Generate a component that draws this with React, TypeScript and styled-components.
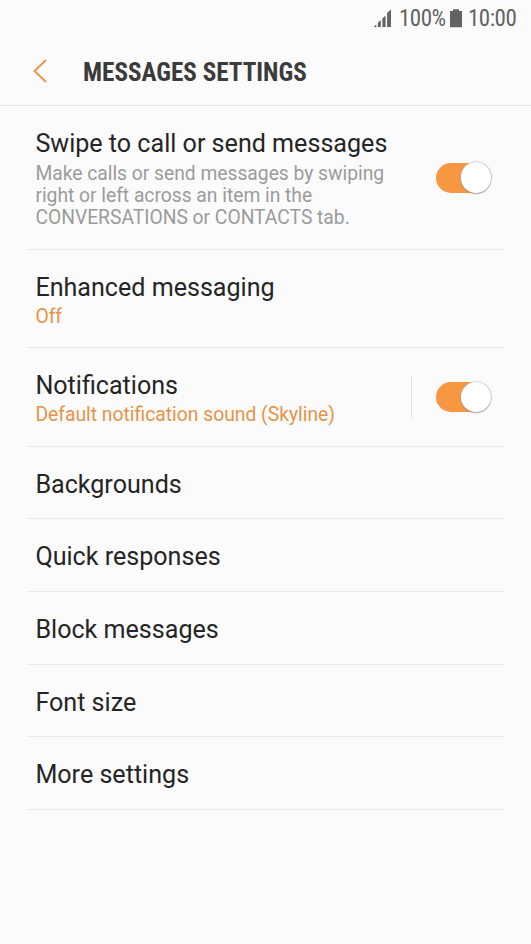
import React from "react";
import styled, { createGlobalStyle } from "styled-components";

const GlobalStyle = createGlobalStyle`
  body { margin: 0; background: #fbfbfb; }
  * { box-sizing: border-box; }
`;

const Screen = styled.main`
  width: 531px;
  height: 944px;
  overflow: hidden;
  background: #fbfbfb;
  font-family: Roboto, sans-serif;
  color: #252525;
`;

const StatusBar = styled.div`
  display: flex;
  align-items: center;
  height: 38px;
  padding: 0 0 2px 373px;
  color: #636363;
`;

const StatusText = styled.span<{ $width: number }>`
  width: ${(p) => p.$width}px;
  font-family: "Roboto Condensed", Roboto, sans-serif;
  font-stretch: 75%;
  font-size: 23px;
  letter-spacing: -0.5px;
  line-height: 36px;
  padding-top: 2px;
  white-space: nowrap;
`;

const SignalIcon = styled.svg`
  width: 19px;
  height: 19px;
  margin-right: 7px;
`;

const BatteryIcon = styled.svg`
  width: 12px;
  height: 19px;
  margin: 0 6px 0 5px;
`;

const Header = styled.header`
  display: flex;
  align-items: center;
  height: 68px;
  border-bottom: 1px solid #e4e4e4;
  padding: 0 0 0 32px;
`;

const BackButton = styled.button`
  display: flex;
  width: 51px;
  height: 26px;
  margin-bottom: 2px;
  padding: 0;
  border: 0;
  background: none;
`;

const PageTitle = styled.h1`
  margin: 2px 0 0;
  font-family: "Roboto Condensed", Roboto, sans-serif;
  font-stretch: 75%;
  font-weight: 700;
  font-size: 25.15px;
  line-height: 30px;
  color: #3b3b3b;
  white-space: nowrap;
`;

const List = styled.div`
  margin: 0 27px;
`;

const Row = styled.section<{ $height: number }>`
  display: flex;
  align-items: center;
  height: ${(p) => p.$height}px;
  border-bottom: 1px solid #e9e9e9;
  padding: 0 13px 0 8.4px;
`;

const RowText = styled.div`
  flex: 1;
  align-self: flex-start;
  padding-top: 23px;
`;

const Title = styled.h2`
  margin: 0;
  font-weight: 400;
  font-size: 25.1px;
  line-height: 30px;
  white-space: nowrap;
`;

const Detail = styled.p<{ $accent?: boolean }>`
  margin: ${(p) => (p.$accent ? 2.5 : 3.6)}px 0 0;
  font-size: 19.3px;
  letter-spacing: ${(p) => (p.$accent ? 0 : -0.02)}px;
  line-height: 22.4px;
  white-space: pre-line;
  color: ${(p) => (p.$accent ? "#e69348" : "#9b9b9b")};
`;

const Separator = styled.div`
  width: 1px;
  height: 43px;
  margin-right: 24px;
  background: #e4e4e4;
`;

const Track = styled.div`
  display: flex;
  align-items: center;
  justify-content: flex-end;
  width: 55px;
  height: 30px;
  border-radius: 15px;
  background: linear-gradient(to right, #f79742 44px, transparent 44px);
`;

const Knob = styled.div`
  flex: none;
  width: 30.5px;
  height: 30.5px;
  border-radius: 50%;
  background: #fff;
  box-shadow: 0 0 0 0.6px #b5b5b5, 0 0.8px 1.4px rgba(0, 0, 0, 0.45);
`;

const Toggle = () => (
  <Track role="switch" aria-checked="true">
    <Knob />
  </Track>
);

type Setting = {
  title: string;
  height: number;
  detail?: string;
  accent?: boolean;
  toggle?: boolean;
  separator?: boolean;
};

const settings: Setting[] = [
  {
    title: "Swipe to call or send messages",
    detail:
      "Make calls or send messages by swiping\nright or left across an item in the\nCONVERSATIONS or CONTACTS tab.",
    height: 144,
    toggle: true,
  },
  { title: "Enhanced messaging", detail: "Off", accent: true, height: 98 },
  {
    title: "Notifications",
    detail: "Default notification sound (Skyline)",
    accent: true,
    height: 99,
    toggle: true,
    separator: true,
  },
  { title: "Backgrounds", height: 72 },
  { title: "Quick responses", height: 73 },
  { title: "Block messages", height: 73 },
  { title: "Font size", height: 72 },
  { title: "More settings", height: 73 },
];

export default function App() {
  return (
    <Screen>
      <GlobalStyle />
      <StatusBar>
        <SignalIcon viewBox="0 0 19 19" fill="currentColor">
          <path d="M0.5 18 3.3 15.4V18zM4.9 13.8 7.8 11V18H4.9zM9.4 9.4 12.6 6.4V18H9.4zM14.1 4 18 0.4V18H14.1z" />
        </SignalIcon>
        <StatusText $width={46}>100%</StatusText>
        <BatteryIcon viewBox="0 0 12 19" fill="currentColor">
          <path d="M3 0.3h6V2h3v16.2H0V2h3z" />
        </BatteryIcon>
        <StatusText $width={50}>10:00</StatusText>
      </StatusBar>
      <Header>
        <BackButton aria-label="Back">
          <svg width="16" height="26" viewBox="0 0 16 26" fill="none">
            <path d="M14 2 2.5 13 14 24" stroke="#e69348" strokeWidth="1.9" />
          </svg>
        </BackButton>
        <PageTitle>MESSAGES SETTINGS</PageTitle>
      </Header>
      <List>
        {settings.map((s) => (
          <Row key={s.title} $height={s.height}>
            <RowText>
              <Title>{s.title}</Title>
              {s.detail && <Detail $accent={s.accent}>{s.detail}</Detail>}
            </RowText>
            {s.separator && <Separator />}
            {s.toggle && <Toggle />}
          </Row>
        ))}
      </List>
    </Screen>
  );
}
